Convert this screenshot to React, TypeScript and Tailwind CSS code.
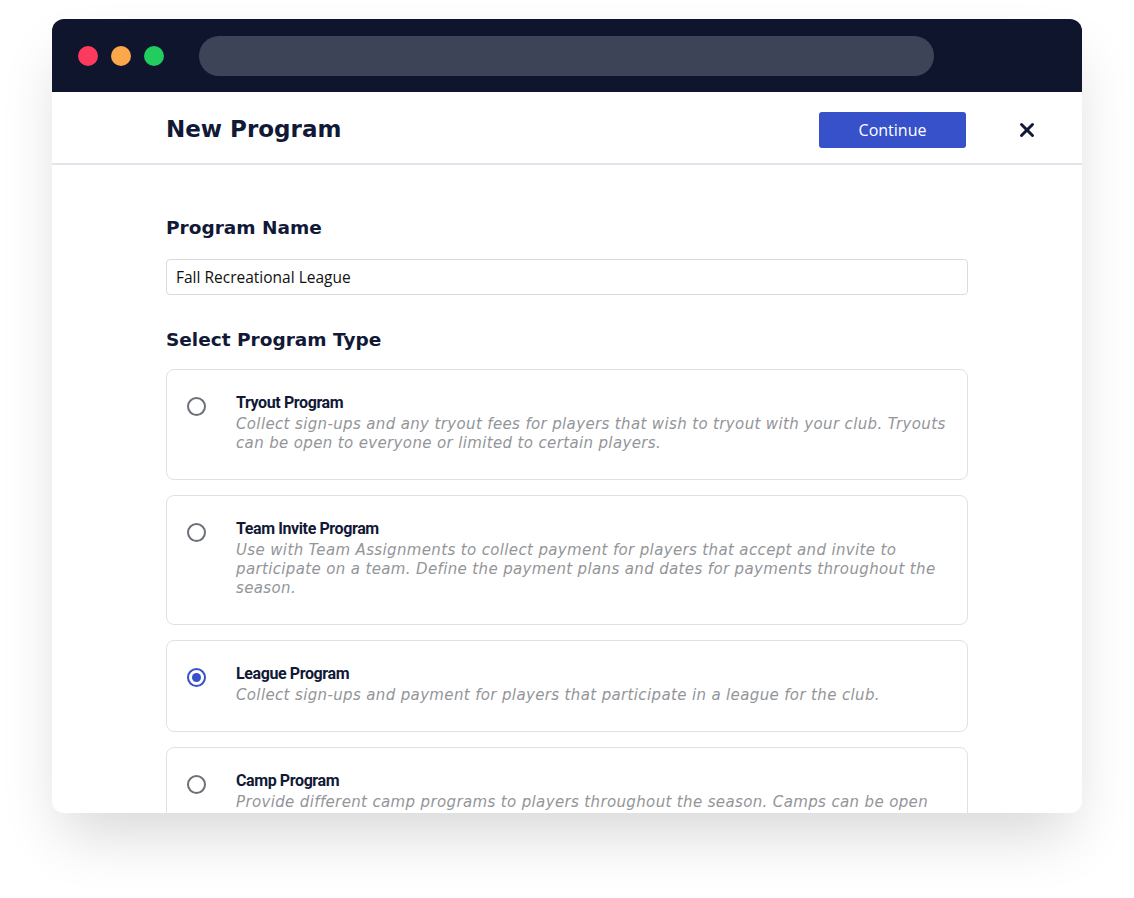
import { X } from 'lucide-react';

type ProgramType = {
  id: string;
  title: string;
  description: string;
};

const programTypes: ProgramType[] = [
  {
    id: 'tryout',
    title: 'Tryout Program',
    description:
      'Collect sign-ups and any tryout fees for players that wish to tryout with your club. Tryouts can be open to everyone or limited to certain players.',
  },
  {
    id: 'team-invite',
    title: 'Team Invite Program',
    description:
      'Use with Team Assignments to collect payment for players that accept and invite to participate on a team. Define the payment plans and dates for payments throughout the season.',
  },
  {
    id: 'league',
    title: 'League Program',
    description: 'Collect sign-ups and payment for players that participate in a league for the club.',
  },
  {
    id: 'camp',
    title: 'Camp Program',
    description:
      'Provide different camp programs to players throughout the season. Camps can be open to everyone or limited to certain players.',
  },
];

const headingFont = "font-['DejaVu_Sans',sans-serif]";

const Radio = ({ checked }: { checked: boolean }) => (
  <span
    className={`mt-[5px] flex h-[19px] w-[19px] shrink-0 items-center justify-center rounded-full border-2 ${
      checked ? 'border-[#3651c9]' : 'border-[#6b7079]'
    }`}
  >
    {checked && <span className="h-[9px] w-[9px] rounded-full bg-[#3651c9]" />}
  </span>
);

const ProgramCard = ({ item, selected }: { item: ProgramType; selected: boolean }) => (
  <div className="flex gap-[30px] rounded-lg border border-[#dde1e8] bg-white pl-[20px] pr-[18.5px] pt-[22px] pb-[26px]">
    <Radio checked={selected} />
    <div className="min-w-0">
      <div className="font-['Roboto',sans-serif] text-[16px] font-bold leading-[21px] tracking-[-0.4px] text-[#111936]">
        {item.title}
      </div>
      <p className="mt-[2px] font-['DejaVu_Sans',sans-serif] text-[15px] italic leading-[19px] tracking-[0.36px] text-[#939599]">
        {item.description}
      </p>
    </div>
  </div>
);

export default function App() {
  const selected = 'league';

  return (
    <div className="min-h-[898px] bg-white pl-[52px] pt-[19px]">
      <div className="flex h-[794px] w-[1030px] flex-col overflow-hidden rounded-xl bg-white shadow-[0_30px_60px_-10px_rgba(0,0,0,0.16)]">
        {/* window chrome */}
        <div className="flex h-[73px] shrink-0 items-center bg-[#0e152d] pl-[26px]">
          <div className="flex gap-[13px]">
            <span className="h-[20px] w-[20px] rounded-full bg-[#fb3a5e]" />
            <span className="h-[20px] w-[20px] rounded-full bg-[#fda74c]" />
            <span className="h-[20px] w-[20px] rounded-full bg-[#22cc5e]" />
          </div>
          <div className="ml-[35px] h-[40px] w-[735px] rounded-full bg-[#3e4458]" />
        </div>

        {/* header */}
        <div className="flex h-[73px] shrink-0 items-center border-b-2 border-[#e1e4eb] pl-[114px] pr-[44px] pt-[4px]">
          <h1 className={`${headingFont} text-[23px] font-bold text-[#111936]`}>New Program</h1>
          <button className="ml-auto h-[36px] w-[147px] rounded-[3px] bg-[#3651c9] font-['Open_Sans',sans-serif] text-[16px] text-white">
            Continue
          </button>
          <button className="ml-[50px] text-[#111936]" aria-label="Close">
            <X className="h-[22px] w-[22px]" strokeWidth={3.2} />
          </button>
        </div>

        {/* form */}
        <div className="w-[916px] pl-[114px] pt-[50px]">
          <h2 className={`${headingFont} text-[18.5px] font-bold leading-[26px] text-[#111936]`}>Program Name</h2>
          <input
            readOnly
            value="Fall Recreational League"
            className="mt-[18px] h-[36px] w-full rounded-[4px] border border-[#d7dbe3] px-[9px] font-['Open_Sans',sans-serif] text-[15.5px] text-[#111] outline-none"
          />
          <h2 className={`${headingFont} mt-[32px] text-[18.5px] font-bold leading-[26px] text-[#111936]`}>
            Select Program Type
          </h2>
          <div className="mt-[16px] flex flex-col gap-[15px]">
            {programTypes.map((item) => (
              <ProgramCard key={item.id} item={item} selected={item.id === selected} />
            ))}
          </div>
        </div>
      </div>
    </div>
  );
}
